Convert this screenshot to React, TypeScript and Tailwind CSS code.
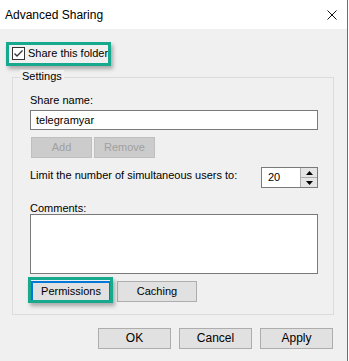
import React from "react";

const font = { fontFamily: '"Liberation Sans", Arial, sans-serif' };

function WinButton({
  label,
  disabled,
  focused,
  className = "",
}: {
  label: string;
  disabled?: boolean;
  focused?: boolean;
  className?: string;
}) {
  const base = disabled
    ? "border-[#bfbfbf] bg-[#cccccc] text-[#a0a0a0]"
    : focused
      ? "border-2 border-[#0078d7] bg-[#e1e1e1] text-black"
      : "border-[#adadad] bg-[#e1e1e1] text-black";
  return (
    <div
      className={`flex h-[21px] items-center justify-center border text-[11px] leading-[13px] ${base} ${className}`}
    >
      {label}
    </div>
  );
}

function Highlight({ className }: { className: string }) {
  return (
    <div
      className={`pointer-events-none absolute border-[3px] border-[#17a98e] shadow-[2px_3px_4px_rgba(0,0,0,0.3)] ${className}`}
    />
  );
}

export default function App() {
  return (
    <div className="h-[361px] w-[349px] bg-white" style={font}>
      <div className="flex h-[361px] w-[348px] flex-col border-r border-[#6e6e6e]">
        {/* title bar */}
        <div className="flex h-[29px] items-center justify-between bg-white pl-[5px] pr-[10px]">
          <span className="text-[12px] text-black">Advanced Sharing</span>
          <svg width="10" height="10" viewBox="0 0 10 10">
            <path d="M0.5 0.5 L9.5 9.5 M9.5 0.5 L0.5 9.5" stroke="#111" strokeWidth="1" />
          </svg>
        </div>

        <div className="flex flex-1 flex-col bg-[#f0f0f0]">
          {/* share checkbox */}
          <div className="relative ml-[12px] mt-[18px] flex h-[13px] items-center gap-[3px]">
            <div className="flex h-[13px] w-[13px] items-center justify-center border border-[#333333] bg-white">
              <svg width="11" height="11" viewBox="0 0 11 11">
                <path d="M1.5 5.5 L4 8 L9.5 2.5" fill="none" stroke="#333" strokeWidth="1.3" />
              </svg>
            </div>
            <span className="text-[11px] leading-[13px] text-black">Share this folder</span>
            <Highlight className="-left-[6px] -top-[5px] h-[24px] w-[105px]" />
          </div>

          {/* settings group */}
          <div className="relative ml-[12px] mt-[17px] w-[322px] border border-[#dcdcdc] pb-[12px] pl-[17px] pr-[15px] pt-[16px]">
            <span className="absolute -top-[8px] left-[7px] bg-[#f0f0f0] px-[2px] text-[11px] leading-[13px] text-black">
              Settings
            </span>

            <div className="text-[11px] leading-[13px] text-black">Share name:</div>
            <div className="mt-[3px] flex h-[20px] w-[288px] items-center border border-[#7a7a7a] bg-white pl-[5px] text-[11px] text-black">
              telegramyar
            </div>

            <div className="ml-[1px] mt-[7px] flex gap-[2px]">
              <WinButton label="Add" disabled className="w-[61px]" />
              <WinButton label="Remove" disabled className="w-[61px]" />
            </div>

            <div className="mt-[9px] flex w-[288px] items-start justify-between">
              <span className="mt-[2px] text-[11px] leading-[13px] text-black">
                Limit the number of simultaneous users to:
              </span>
              <div className="flex h-[21px] w-[57px] border border-[#7a7a7a] bg-white">
                <span className="flex flex-1 items-center pl-[6px] text-[11px] text-black">20</span>
                <div className="flex w-[17px] flex-col border-l border-[#adadad]">
                  <div className="flex flex-1 items-center justify-center border-b border-[#adadad] bg-[#e5e5e5]">
                    <svg width="7" height="4" viewBox="0 0 7 4">
                      <path d="M0 4 L3.5 0 L7 4 Z" fill="#000" />
                    </svg>
                  </div>
                  <div className="flex flex-1 items-center justify-center bg-[#e5e5e5]">
                    <svg width="7" height="4" viewBox="0 0 7 4">
                      <path d="M0 0 L3.5 4 L7 0 Z" fill="#000" />
                    </svg>
                  </div>
                </div>
              </div>
            </div>

            <div className="mt-[14px] text-[11px] leading-[12px] text-black">Comments:</div>
            <div className="h-[60px] w-[288px] border border-[#7a7a7a] bg-white" />

            <div className="ml-[1px] mt-[7px] flex gap-[6px]">
              <div className="relative">
                <WinButton label="Permissions" focused className="w-[80px]" />
                <Highlight className="-left-[3px] -top-[4px] h-[26px] w-[85px]" />
              </div>
              <WinButton label="Caching" className="w-[80px]" />
            </div>
          </div>

          {/* dialog buttons */}
          <div className="mr-[14px] mt-[13px] flex justify-end gap-[8px]">
            <WinButton label="OK" className="w-[73px] !text-[12px]" />
            <WinButton label="Cancel" className="w-[73px] !text-[12px]" />
            <WinButton label="Apply" className="w-[73px] !text-[12px]" />
          </div>
        </div>
      </div>
    </div>
  );
}
